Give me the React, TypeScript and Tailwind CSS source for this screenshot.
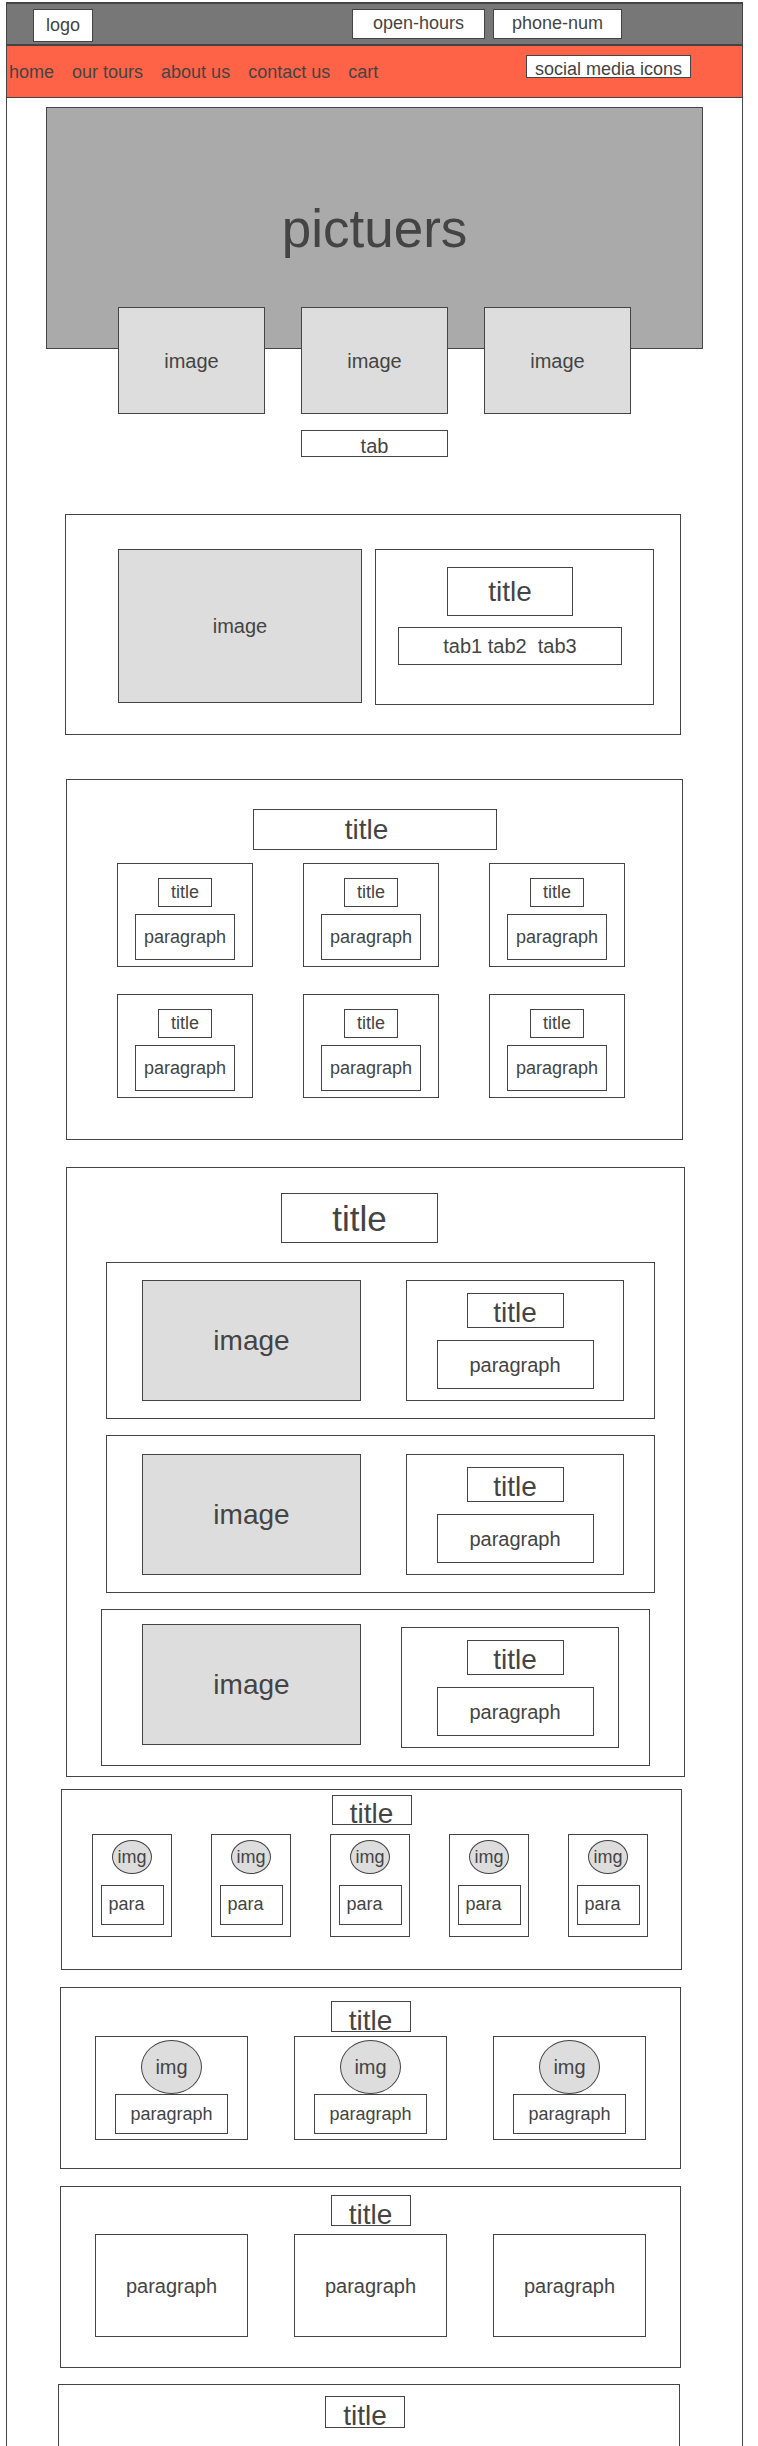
import type { ReactNode } from 'react';
import { clsx } from 'clsx';

type BoxProps = { className?: string; children?: ReactNode };

const frame = 'border border-[#444444]';
const centered = 'flex items-center justify-center';

function Section({ className, children }: BoxProps) {
  return <section className={clsx(frame, 'flex flex-col items-center', className)}>{children}</section>;
}

function SectionTitle({ className, children }: BoxProps) {
  return <h2 className={clsx(frame, centered, 'text-[28px] leading-none', className)}>{children}</h2>;
}

function Paragraph({ className, children = 'paragraph' }: BoxProps) {
  return <p className={clsx(frame, centered, className)}>{children}</p>;
}

function Picture({ className, children = 'image' }: BoxProps) {
  return (
    <div role="img" aria-label={String(children)} className={clsx(frame, centered, 'bg-[#dddddd]', className)}>
      {children}
    </div>
  );
}

const links = ['home', 'our tours', 'about us', 'contact us', 'cart'];

const features = [
  { row: 'ml-[39px] mr-[29px] pt-[17px] pl-[35px] gap-x-[45px]', panel: '' },
  { row: 'ml-[39px] mr-[29px] pt-[18px] pl-[35px] gap-x-[45px]', panel: '' },
  { row: 'mx-[34px] pt-[14px] pl-[40px] gap-x-[40px]', panel: 'mt-[3px] pl-[10px]' },
];

function Header() {
  return (
    <header className="flex items-start border-x border-y-2 border-[#444444] bg-[#777777] pt-[5px] pr-[120px] pb-[2px] pl-[26px] text-lg leading-none">
      <div className={clsx(frame, centered, 'h-[33px] w-[60px] bg-white pb-[2px]')}>logo</div>
      <div className="ml-auto flex gap-2">
        <div className={clsx(frame, centered, 'h-[30px] w-[133px] bg-white pb-[2px]')}>open-hours</div>
        <div className={clsx(frame, centered, 'h-[30px] w-[129px] bg-white pb-[2px]')}>phone-num</div>
      </div>
    </header>
  );
}

function NavBar() {
  return (
    <nav className="flex min-h-[52px] items-center border-b border-[#444444] bg-[#ff6347] pr-[51px] pl-[2px] text-lg leading-none">
      <ul className="flex gap-[18px]">
        {links.map((link) => (
          <li key={link}>
            <a href="#">{link}</a>
          </li>
        ))}
      </ul>
      <div className={clsx(frame, centered, 'mt-[9px] ml-auto h-[23px] w-[165px] self-start bg-white pt-1 whitespace-nowrap')}>
        social media icons
      </div>
    </nav>
  );
}

export default function App() {
  return (
    <div className="bg-white pt-[2px] pr-[15px] pl-[6px] font-['Liberation_Sans',Arial,sans-serif] text-[#444444]">
      <Header />
      <div className="border-x border-[#444444]">
        <NavBar />
        <main className="flex flex-col">
          <div className={clsx(frame, centered, 'mx-[39px] mt-[9px] h-[242px] bg-[#aaaaaa]')}>
            <h1 className="text-[53px] leading-none">pictuers</h1>
          </div>
          <div className="relative mx-[111px] -mt-[42px] grid grid-cols-3 gap-[36px] text-xl leading-none">
            <Picture className="h-[107px]" />
            <Picture className="h-[107px]" />
            <Picture className="h-[107px]" />
          </div>
          <button type="button" className={clsx(frame, centered, 'mx-auto mt-4 h-[27px] w-1/5 pt-1 text-xl leading-none')}>
            tab
          </button>

          <section
            className={clsx(
              frame,
              'mt-[57px] mr-[61px] ml-[58px] grid grid-cols-[244fr_279fr] items-start gap-[13px] pt-[34px] pr-[26px] pb-[29px] pl-[52px] text-xl leading-none',
            )}
          >
            <Picture className="h-[154px]" />
            <div className={clsx(frame, 'flex h-[156px] flex-col items-center gap-[11px] pt-[17px] pr-[31px] pl-[22px]')}>
              <SectionTitle className="h-[49px] w-[126px]">title</SectionTitle>
              <div className={clsx(frame, centered, 'h-[38px] w-full whitespace-pre')}>
                <span>
                  <button type="button">tab1</button> <button type="button">tab2</button>
                  {'  '}
                  <button type="button">tab3</button>
                </span>
              </div>
            </div>
          </section>

          <Section className="mx-[59px] mt-[44px] pt-[29px] pb-[41px]">
            <SectionTitle className="h-[41px] w-[244px] pr-4">title</SectionTitle>
            <div className="mt-[13px] grid w-full grid-cols-3 gap-x-[50px] gap-y-[27px] pr-[57px] pl-[50px] text-lg leading-none">
              {[1, 2, 3, 4, 5, 6].map((n) => (
                <article key={n} className={clsx(frame, 'flex flex-col items-center gap-[7px] pt-[14px] pb-[6px]')}>
                  <h3 className={clsx(frame, centered, 'h-[29px] w-[54px] pb-[2px]')}>title</h3>
                  <Paragraph className="h-[46px] w-[100px]" />
                </article>
              ))}
            </div>
          </Section>

          <Section className="mt-[27px] mr-[57px] ml-[59px] pt-[25px] pb-[10px]">
            <div className="pr-8">
              <SectionTitle className="h-[50px] w-[157px] text-[35px]">title</SectionTitle>
            </div>
            <div className="mt-[19px] flex flex-col gap-4 self-stretch leading-none">
              {features.map(({ row, panel }, i) => (
                <article key={i} className={clsx(frame, 'grid grid-cols-[219fr_218fr] items-start pr-[30px] pb-[17px]', row)}>
                  <Picture className="h-[121px] text-[28px]" />
                  <div className={clsx(frame, 'flex h-[121px] flex-col items-center gap-3 pt-3', panel)}>
                    <h3 className={clsx(frame, centered, 'h-[35px] w-[97px] pt-1 text-[28px]')}>title</h3>
                    <Paragraph className="h-[49px] w-[157px] text-xl leading-none" />
                  </div>
                </article>
              ))}
            </div>
          </Section>

          <Section className="mt-3 mr-[60px] ml-[54px] pt-[5px] pb-[32px]">
            <SectionTitle className="h-[30px] w-[80px] pt-2">title</SectionTitle>
            <div className="mt-[9px] grid w-full grid-cols-5 gap-[39px] pr-[33px] pl-[30px] text-lg leading-none">
              {[1, 2, 3, 4, 5].map((n) => (
                <article key={n} className={clsx(frame, 'flex flex-col items-center gap-[11px] pt-[5px] pb-[11px]')}>
                  <Picture className="h-[34px] w-[40px] rounded-[50%]">img</Picture>
                  <p className={clsx(frame, 'flex h-[40px] w-[63px] items-center pb-[2px] pl-[7px]')}>para</p>
                </article>
              ))}
            </div>
          </Section>

          <Section className="mt-[17px] mr-[61px] ml-[53px] pt-[13px] pb-[28px]">
            <SectionTitle className="h-[31px] w-[80px] pt-2">title</SectionTitle>
            <div className="mt-1 grid w-full grid-cols-3 gap-[46px] px-[34px] leading-none">
              {[1, 2, 3].map((n) => (
                <article key={n} className={clsx(frame, 'flex flex-col items-center pt-[3px] pb-[5px]')}>
                  <Picture className="h-[54px] w-[61px] rounded-[50%] text-xl leading-none">img</Picture>
                  <Paragraph className="h-[40px] w-[113px] text-lg leading-none" />
                </article>
              ))}
            </div>
          </Section>

          <Section className="mt-[17px] mr-[61px] ml-[53px] pt-[8px] pb-[30px]">
            <SectionTitle className="h-[31px] w-[80px] pt-2">title</SectionTitle>
            <div className="mt-2 grid w-full grid-cols-3 gap-[46px] px-[34px] text-xl leading-none">
              {[1, 2, 3].map((n) => (
                <Paragraph key={n} className="h-[103px]" />
              ))}
            </div>
          </Section>

          <Section className="mt-4 mr-[62px] ml-[51px] border-b-0 pt-[11px] pr-2 pb-[18px]">
            <SectionTitle className="h-[32px] w-[80px] pt-2">title</SectionTitle>
          </Section>
        </main>
      </div>
    </div>
  );
}
